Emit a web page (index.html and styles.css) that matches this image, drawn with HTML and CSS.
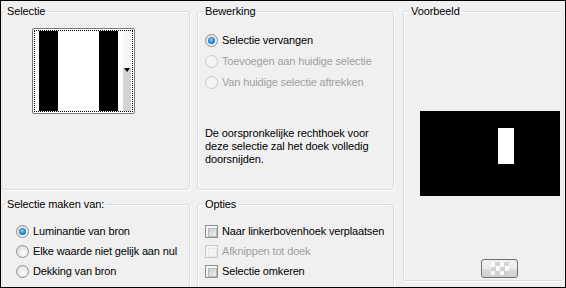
FILE: index.html
```html
<!DOCTYPE html>
<html>
<head>
<meta charset="utf-8">
<link rel="stylesheet" href="styles.css">
</head>
<body>
<div class="dialog">
  <fieldset class="group g-sel">
    <legend class="lg-narrow">Selectie</legend>
    <div class="swatch">
      <div class="swatch-inner">
        <span class="pad"></span>
        <span class="bar black"></span>
        <span class="bar white"></span>
        <span class="bar black"></span>
        <span class="strip"><span class="strip-top"></span><span class="strip-bot"><span class="arrow"></span></span></span>
      </div>
    </div>
  </fieldset>

  <fieldset class="group g-edit">
    <legend>Bewerking</legend>
    <div class="opts opts-top">
      <label class="opt"><span class="radio checked"></span>Selectie vervangen</label>
      <label class="opt disabled"><span class="radio"></span>Toevoegen aan huidige selectie</label>
      <label class="opt disabled"><span class="radio"></span>Van huidige selectie aftrekken</label>
    </div>
    <p class="desc">De oorspronkelijke rechthoek voor deze selectie zal het doek volledig doorsnijden.</p>
  </fieldset>

  <fieldset class="group g-prev">
    <legend>Voorbeeld</legend>
    <div class="preview"><span class="preview-sel"></span></div>
    <button class="alpha-btn" type="button"><span class="checker"></span></button>
  </fieldset>

  <fieldset class="group g-src">
    <legend class="lg-narrow">Selectie maken van:</legend>
    <div class="opts opts-bottom opts-src">
      <label class="opt"><span class="radio checked"></span>Luminantie van bron</label>
      <label class="opt"><span class="radio"></span>Elke waarde niet gelijk aan nul</label>
      <label class="opt"><span class="radio"></span>Dekking van bron</label>
    </div>
  </fieldset>

  <fieldset class="group g-opt">
    <legend>Opties</legend>
    <div class="opts opts-bottom">
      <label class="opt"><span class="check"></span>Naar linkerbovenhoek verplaatsen</label>
      <label class="opt disabled"><span class="check"></span>Afknippen tot doek</label>
      <label class="opt"><span class="check"></span>Selectie omkeren</label>
    </div>
  </fieldset>
</div>
</body>
</html>
```

FILE: styles.css
```css
* { box-sizing: border-box; }
html, body { margin: 0; padding: 0; background: #000; }
body {
  font-family: "Liberation Sans", Arial, sans-serif;
  font-size: 11px;
  line-height: 13px;
  color: #000;
}
.dialog {
  width: 566px;
  height: 288px;
  border: 1px solid #000;
  background: #f0f0f0;
  overflow: hidden;
  padding: 4px 0 0 1px;
  display: grid;
  grid-template-columns: 188px 7px 197px 9px 161px;
  grid-template-rows: 185px 8px 110px;
}
.group {
  margin: 0;
  padding: 0;
  min-width: 0;
  border: 1px solid #d5dfe5;
  border-radius: 3px;
  box-shadow: inset 1px 1px 0 #fff, 1px 1px 0 #fff;
}
.group legend {
  padding: 0 2px;
  margin-left: 5px;
  line-height: 13px;
  letter-spacing: -0.1px;
}
.group legend.lg-narrow { margin-left: 2px; }
.g-sel { grid-column: 1; grid-row: 1; }
.g-edit { grid-column: 3; grid-row: 1; }
.g-prev { grid-column: 5; grid-row: 1 / 4; height: 276px; align-self: start; }
.g-src { grid-column: 1; grid-row: 3; }
.g-opt { grid-column: 3; grid-row: 3; }

/* swatch */
.swatch {
  margin: 10px 0 0 29px;
  width: 103px;
  height: 86px;
  border: 1px solid #7a7a7a;
  border-radius: 2px;
  background: #fff;
}
.swatch-inner {
  margin: 1px;
  height: 82px;
  border: 1px dotted #000;
  display: flex;
}
.swatch-inner .pad { width: 4px; background: #fff; }
.bar { width: 19px; }
.bar.black { background: #000; }
.bar.white { width: 41px; background: #fff; }
.strip { width: 13px; display: flex; flex-direction: column; }
.strip-top {
  height: 37px;
  background: linear-gradient(90deg, #fff 0, #fff 5px, #f6f6f6 5px, #f6f6f6 13px);
}
.strip-bot {
  flex: 1;
  display: flex;
  justify-content: flex-end;
  align-items: flex-start;
  background: linear-gradient(90deg, #fff 0, #fff 5px, #d6d6d6 5px, #cfcfcf 13px);
}
.arrow {
  width: 0; height: 0;
  border-left: 3px solid transparent;
  border-right: 3px solid transparent;
  border-top: 4px solid #000;
  margin-right: 1px;
}

/* options */
.opts { display: flex; flex-direction: column; }
.opts-top { padding: 12px 0 0 7px; }
.opts-top .opt { height: 21px; }
.opts-bottom { padding: 10px 0 0 7px; }
.opts-bottom .opt { height: 20px; }
.opts-src { padding-left: 13px; }
.opt {
  display: flex;
  align-items: center;
  gap: 4px;
  white-space: nowrap;
  letter-spacing: -0.15px;
}
.opt.disabled { color: #a0a0a0; }

.radio {
  width: 13px; height: 13px;
  flex: none;
  border-radius: 50%;
  border: 1px solid #8e9092;
  background: radial-gradient(circle at 60% 65%, #fdfdfd 0, #e8e8e8 55%, #d6d6d6 100%);
  display: flex;
  align-items: center;
  justify-content: center;
}
.radio.checked::after {
  content: "";
  width: 7px; height: 7px;
  border-radius: 50%;
  background: radial-gradient(circle at 45% 40%, #8fd3ff 0, #1f7fcf 55%, #114f86 100%);
}
.disabled .radio {
  border-color: #c9cbcc;
  background: #f4f4f4;
}

.check {
  width: 13px; height: 13px;
  flex: none;
  border: 1px solid #8e8f8f;
  background: #f6f6f6;
  padding: 2px;
}
.check::after {
  content: "";
  display: block;
  width: 100%; height: 100%;
  border: 1px solid #b8b8b8;
  background: linear-gradient(135deg, #cfcfcf, #eeeeee);
}
.disabled .check { border-color: #c9c9c9; }
.disabled .check::after { border-color: #e6e6e6; background: #f3f3f3; }

.desc {
  margin: 34px 0 0 7px;
  width: 186px;
  letter-spacing: -0.1px;
}

/* preview */
.preview {
  margin: 93px 0 0 16px;
  width: 140px;
  height: 85px;
  background: #000;
  padding: 17px 0 0 78px;
}
.preview-sel {
  display: block;
  width: 16px;
  height: 36px;
  background: #fff;
}
.alpha-btn {
  display: flex;
  align-items: center;
  justify-content: center;
  margin: 63px 0 0 77px;
  width: 37px;
  height: 19px;
  padding: 0;
  border: 1px solid #707070;
  border-radius: 3px;
  background: linear-gradient(#f2f2f2, #ebebeb 50%, #dddddd 51%, #cfcfcf);
}
.checker {
  width: 18px;
  height: 13px;
  background-color: #fff;
  background-image: conic-gradient(#cfcfcf 25%, #fff 0 50%, #cfcfcf 0 75%, #fff 0);
  background-size: 9px 9px;
  opacity: 0.8;
}
```
